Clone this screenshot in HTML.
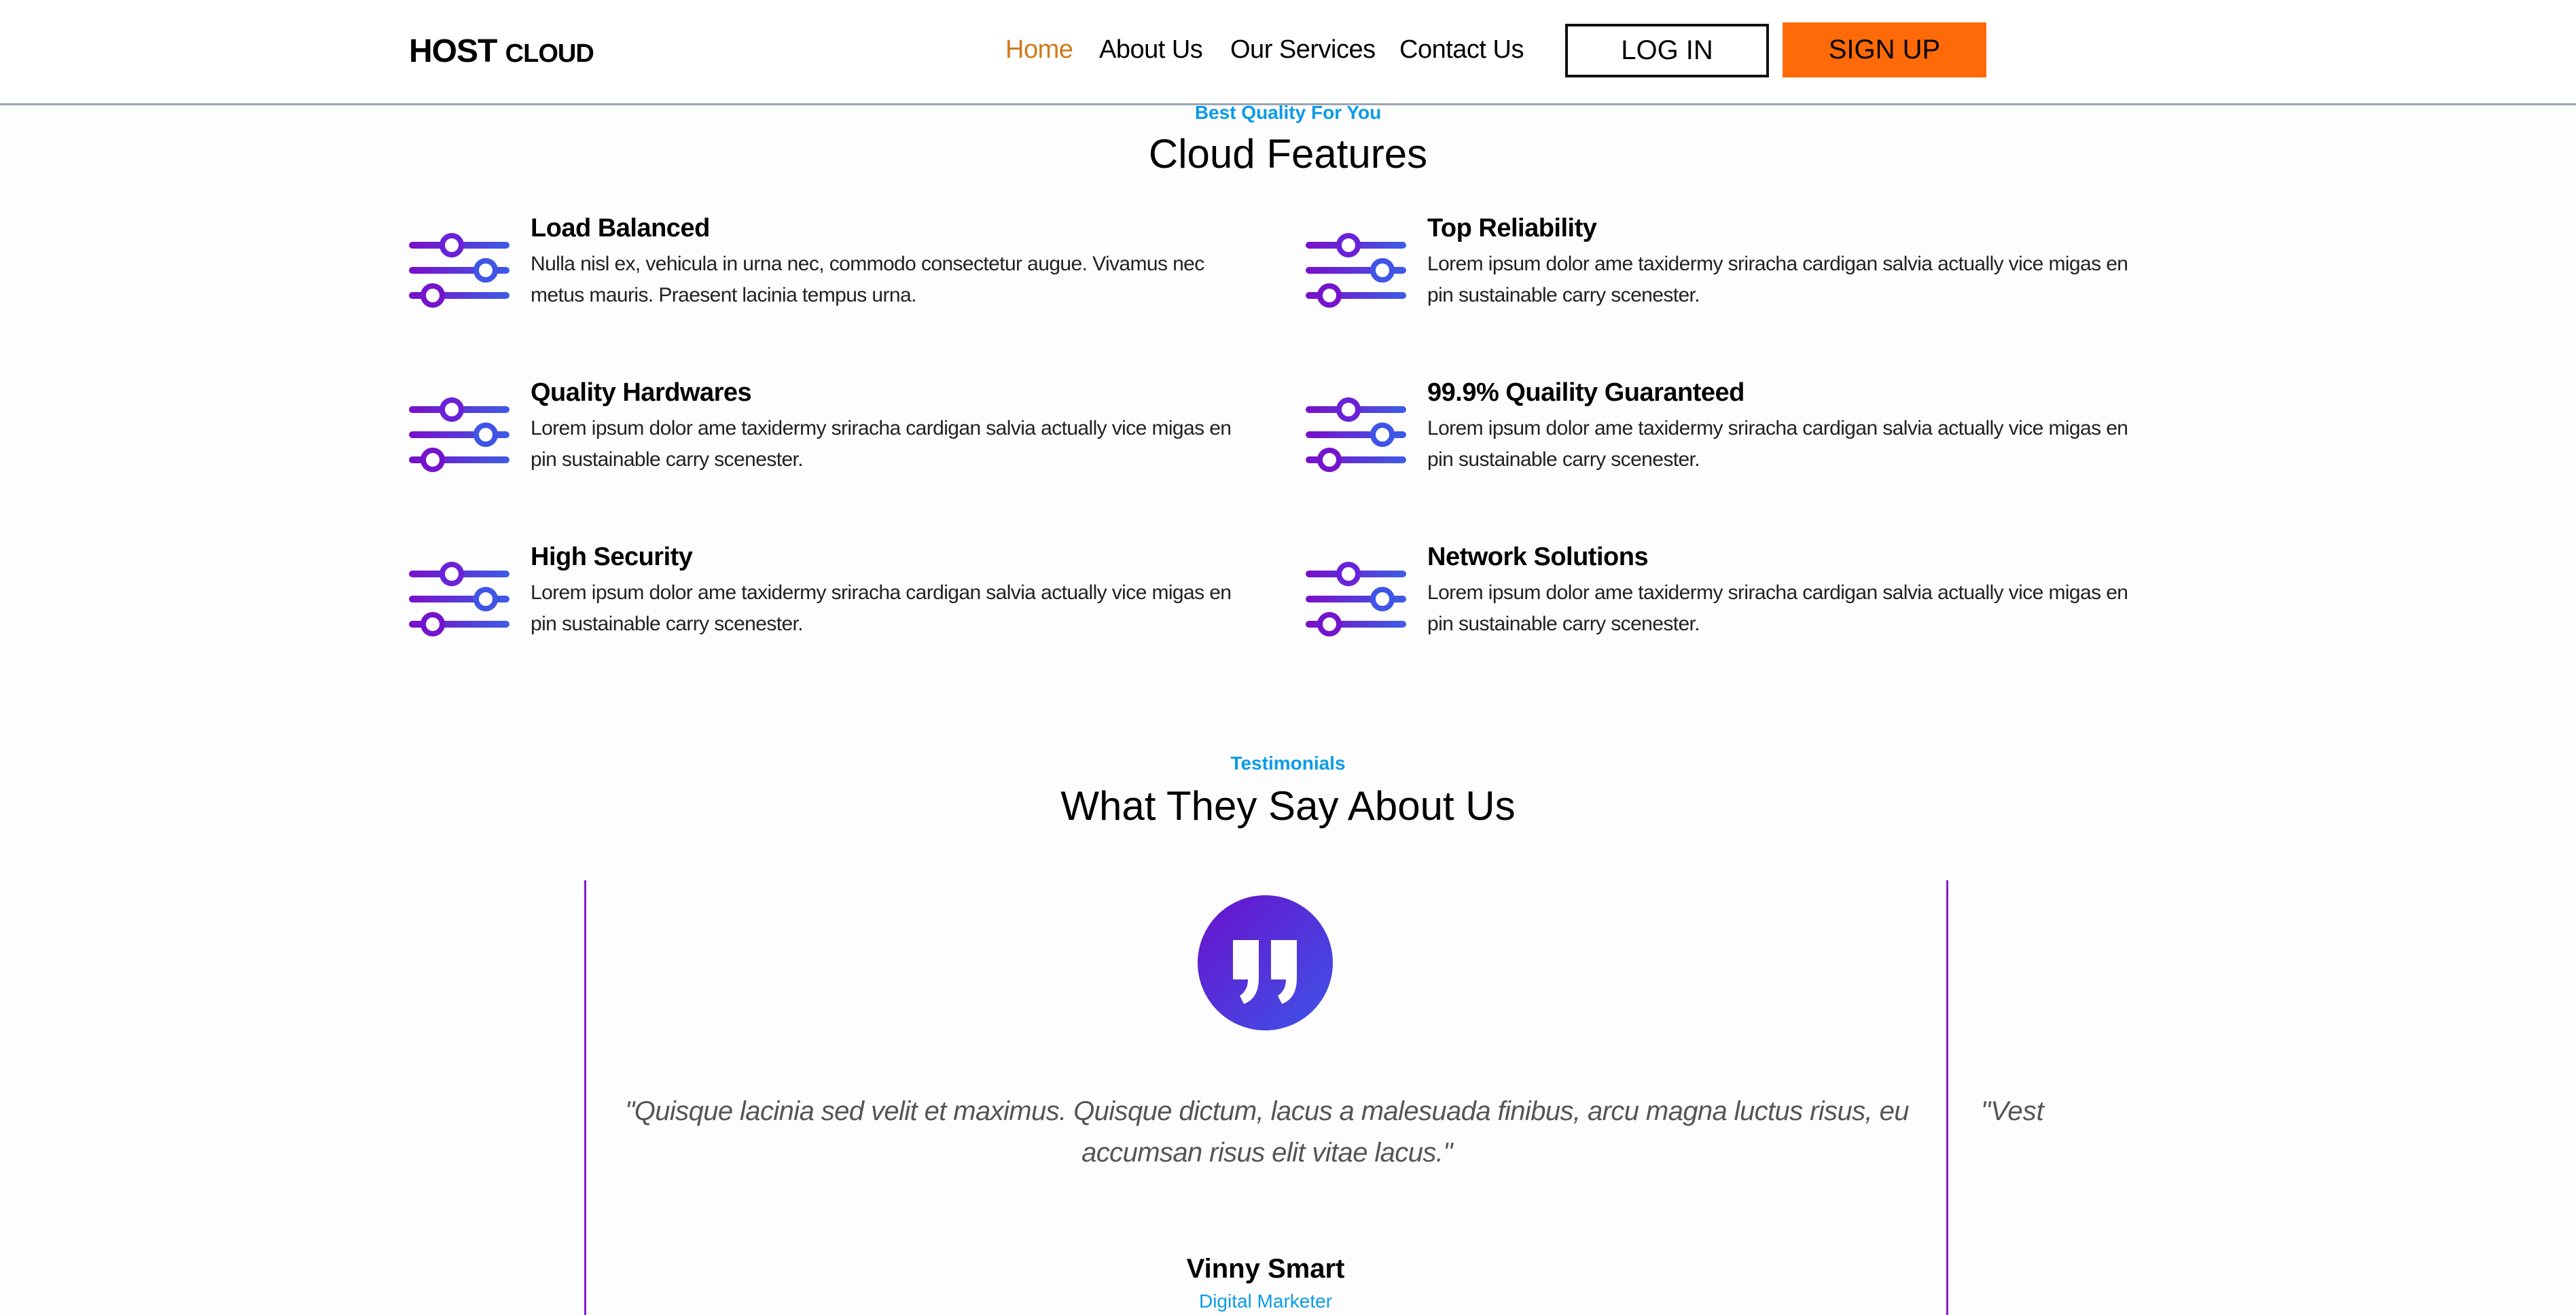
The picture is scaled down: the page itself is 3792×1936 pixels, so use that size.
<!DOCTYPE html>
<html><head><meta charset="utf-8"><style>
*{margin:0;padding:0;box-sizing:border-box}
body{width:3792px;height:1922px;background:#fdfdfd;font-family:"Liberation Sans",sans-serif;position:relative;overflow:hidden;color:#000}
.a{position:absolute;white-space:nowrap}
.hdr{position:absolute;left:0;top:0;width:3792px;height:155px;background:#fff;border-bottom:3px solid #9aa7b4}
.nav{font-size:38px;top:52px;letter-spacing:-0.5px}
.btn{position:absolute;font-size:40px;display:flex;align-items:center;justify-content:center}
.t{font-size:38px;font-weight:bold;letter-spacing:-0.5px}
.d{font-size:30px;letter-spacing:-0.6px;color:#222;line-height:46px}
.sub{font-size:28px;font-weight:bold;color:#0a9be8;width:3792px;text-align:center;left:0}
.h2{font-size:60px;width:3792px;text-align:center;left:0}
</style></head><body>
<div class="hdr"></div>
<div class="a" style="left:602px;top:48px;font-size:48px;font-weight:bold;letter-spacing:-1px">HOST <span style="font-size:38px">CLOUD</span></div>
<div class="a nav" style="left:1480px;color:#d07a1a">Home</div>
<div class="a nav" style="left:1618px">About Us</div>
<div class="a nav" style="left:1811px">Our Services</div>
<div class="a nav" style="left:2060px">Contact Us</div>
<div class="btn" style="left:2304px;top:35px;width:300px;height:79px;border:4px solid #111;background:#fff">LOG IN</div>
<div class="btn" style="left:2624px;top:33px;width:300px;height:81px;background:#ff6a08">SIGN UP</div>

<div class="a sub" style="top:150px">Best Quality For You</div>
<div class="a h2" style="top:192px">Cloud Features</div>

<svg width="0" height="0" style="position:absolute"><defs>
<linearGradient id="g" gradientUnits="userSpaceOnUse" x1="0" y1="0" x2="148" y2="0"><stop offset="0" stop-color="#7a0fc9"/><stop offset="1" stop-color="#3d5ce6"/></linearGradient>
<g id="ic" fill="none" stroke-linecap="round">
<line x1="5" y1="31" x2="143" y2="31" stroke="url(#g)" stroke-width="10"/>
<line x1="5" y1="68" x2="143" y2="68" stroke="url(#g)" stroke-width="10"/>
<line x1="5" y1="105" x2="143" y2="105" stroke="url(#g)" stroke-width="10"/>
<circle cx="63" cy="31" r="14" fill="#fff" stroke="#6a22d8" stroke-width="8"/>
<circle cx="113" cy="68" r="14" fill="#fff" stroke="#3f55e6" stroke-width="8"/>
<circle cx="35" cy="105" r="14" fill="#fff" stroke="#7414cc" stroke-width="8"/>
</g></defs></svg>

<svg class="a" style="left:602px;top:330px" width="150" height="130"><use href="#ic"/></svg>
<div class="a t" style="left:781px;top:315px">Load Balanced</div>
<div class="a d" style="left:781px;top:366px">Nulla nisl ex, vehicula in urna nec, commodo consectetur augue. Vivamus nec<br>metus mauris. Praesent lacinia tempus urna.</div>

<svg class="a" style="left:1922px;top:330px" width="150" height="130"><use href="#ic"/></svg>
<div class="a t" style="left:2101px;top:315px">Top Reliability</div>
<div class="a d" style="left:2101px;top:366px">Lorem ipsum dolor ame taxidermy sriracha cardigan salvia actually vice migas en<br>pin sustainable carry scenester.</div>

<svg class="a" style="left:602px;top:572px" width="150" height="130"><use href="#ic"/></svg>
<div class="a t" style="left:781px;top:557px">Quality Hardwares</div>
<div class="a d" style="left:781px;top:608px">Lorem ipsum dolor ame taxidermy sriracha cardigan salvia actually vice migas en<br>pin sustainable carry scenester.</div>

<svg class="a" style="left:1922px;top:572px" width="150" height="130"><use href="#ic"/></svg>
<div class="a t" style="left:2101px;top:557px">99.9% Quaility Guaranteed</div>
<div class="a d" style="left:2101px;top:608px">Lorem ipsum dolor ame taxidermy sriracha cardigan salvia actually vice migas en<br>pin sustainable carry scenester.</div>

<svg class="a" style="left:602px;top:814px" width="150" height="130"><use href="#ic"/></svg>
<div class="a t" style="left:781px;top:799px">High Security</div>
<div class="a d" style="left:781px;top:850px">Lorem ipsum dolor ame taxidermy sriracha cardigan salvia actually vice migas en<br>pin sustainable carry scenester.</div>

<svg class="a" style="left:1922px;top:814px" width="150" height="130"><use href="#ic"/></svg>
<div class="a t" style="left:2101px;top:799px">Network Solutions</div>
<div class="a d" style="left:2101px;top:850px">Lorem ipsum dolor ame taxidermy sriracha cardigan salvia actually vice migas en<br>pin sustainable carry scenester.</div>

<div class="a sub" style="top:1108px">Testimonials</div>
<div class="a h2" style="top:1152px">What They Say About Us</div>

<div class="a" style="left:860px;top:1296px;width:3px;height:640px;background:#8a1bd0"></div>
<div class="a" style="left:2865px;top:1296px;width:3px;height:640px;background:#8a1bd0"></div>

<div class="a" style="left:1763px;top:1318px;width:199px;height:199px;border-radius:50%;background:linear-gradient(135deg,#6a11cb,#3d55e8)"></div>
<svg class="a" style="left:1763px;top:1318px" width="199" height="199" fill="#fff">
<path d="M52 66 h38 v56 q0 30 -22 38 l-6 -12 q12 -8 12 -24 h-22 z"/>
<path d="M108 66 h38 v56 q0 30 -22 38 l-6 -12 q12 -8 12 -24 h-22 z"/>
</svg>

<div class="a" style="left:870px;top:1606px;width:1990px;text-align:center;font-size:40px;font-style:italic;color:#555;line-height:61px;white-space:normal;letter-spacing:-0.6px">"Quisque lacinia sed velit et maximus. Quisque dictum, lacus a malesuada finibus, arcu magna luctus risus, eu<br>accumsan risus elit vitae lacus."</div>
<div class="a" style="left:2916px;top:1606px;font-size:40px;font-style:italic;color:#555;line-height:61px">"Vest</div>

<div class="a" style="left:0;width:3726px;text-align:center;top:1846px;font-size:40px;font-weight:bold">Vinny Smart</div>
<div class="a" style="left:0;width:3726px;text-align:center;top:1900px;font-size:28px;color:#0a9be8">Digital Marketer</div>
</body></html>
